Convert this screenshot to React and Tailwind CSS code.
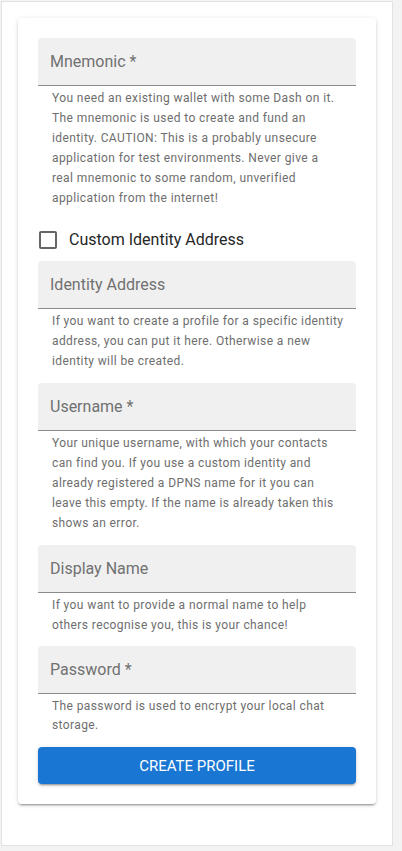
import React from "react";

function Field({ label, lines, className = "" }) {
  return (
    <div className={"flex flex-col " + className}>
      <div className="h-[48px] bg-[#f0f0f0] rounded-t-[4px] border-b border-[#8b8b8b] px-[12px] pt-[12px]">
        <span className="block text-[16px] leading-[23px] text-[#717171]">{label}</span>
      </div>
      <p className="mt-[3px] mx-[14px] text-[12px] leading-[1.66] tracking-[0.4px] text-[#6e6e6e]">
        {lines.map((l, i) => (
          <span key={i} className="block whitespace-nowrap">
            {l}
          </span>
        ))}
      </p>
    </div>
  );
}

export default function App() {
  return (
    <div className="min-h-[851px] bg-[#f3f3f3] pt-[1px] pl-[1px]" style={{ fontFamily: "Roboto, 'Liberation Sans', sans-serif" }}>
      <div className="w-[392px] h-[845px] bg-white border border-[#e2e2e2] p-[16px]">
        <div className="w-[358px] bg-white rounded-[4px] p-[20px] flex flex-col shadow-[0px_3px_1px_-2px_rgba(0,0,0,0.2),0px_2px_2px_0px_rgba(0,0,0,0.14),0px_1px_5px_0px_rgba(0,0,0,0.12)]">
          <Field
            label="Mnemonic *"
            lines={[
              "You need an existing wallet with some Dash on it.",
              "The mnemonic is used to create and fund an",
              "identity. CAUTION: This is a probably unsecure",
              "application for test environments. Never give a",
              "real mnemonic to some random, unverified",
              "application from the internet!",
            ]}
          />
          <div className="mt-[11px] -ml-[11px] flex items-center h-[42px]">
            <div className="p-[9px]">
              <svg viewBox="0 0 24 24" width="24" height="24" className="block">
                <path
                  fill="#666666"
                  d="M19 5v14H5V5h14m0-2H5c-1.11 0-2 .9-2 2v14c0 1.1.89 2 2 2h14c1.1 0 2-.9 2-2V5c0-1.1-.9-2-2-2z"
                />
              </svg>
            </div>
            <span className="text-[16px] leading-[24px] text-[#262626]">Custom Identity Address</span>
          </div>
          <Field
            label="Identity Address"
            lines={[
              "If you want to create a profile for a specific identity",
              "address, you can put it here. Otherwise a new",
              "identity will be created.",
            ]}
          />
          <Field
            className="mt-[11px]"
            label="Username *"
            lines={[
              "Your unique username, with which your contacts",
              "can find you. If you use a custom identity and",
              "already registered a DPNS name for it you can",
              "leave this empty. If the name is already taken this",
              "shows an error.",
            ]}
          />
          <Field
            className="mt-[11px]"
            label="Display Name"
            lines={[
              "If you want to provide a normal name to help",
              "others recognise you, this is your chance!",
            ]}
          />
          <Field
            className="mt-[10px]"
            label="Password *"
            lines={["The password is used to encrypt your local chat", "storage."]}
          />
          <button className="mt-[11px] h-[37px] w-full rounded-[4px] bg-[#1976d2] text-white text-[15px] leading-[26px] uppercase shadow-[0px_3px_1px_-2px_rgba(0,0,0,0.2),0px_2px_2px_0px_rgba(0,0,0,0.14),0px_1px_5px_0px_rgba(0,0,0,0.12)]">
            Create Profile
          </button>
        </div>
      </div>
    </div>
  );
}
